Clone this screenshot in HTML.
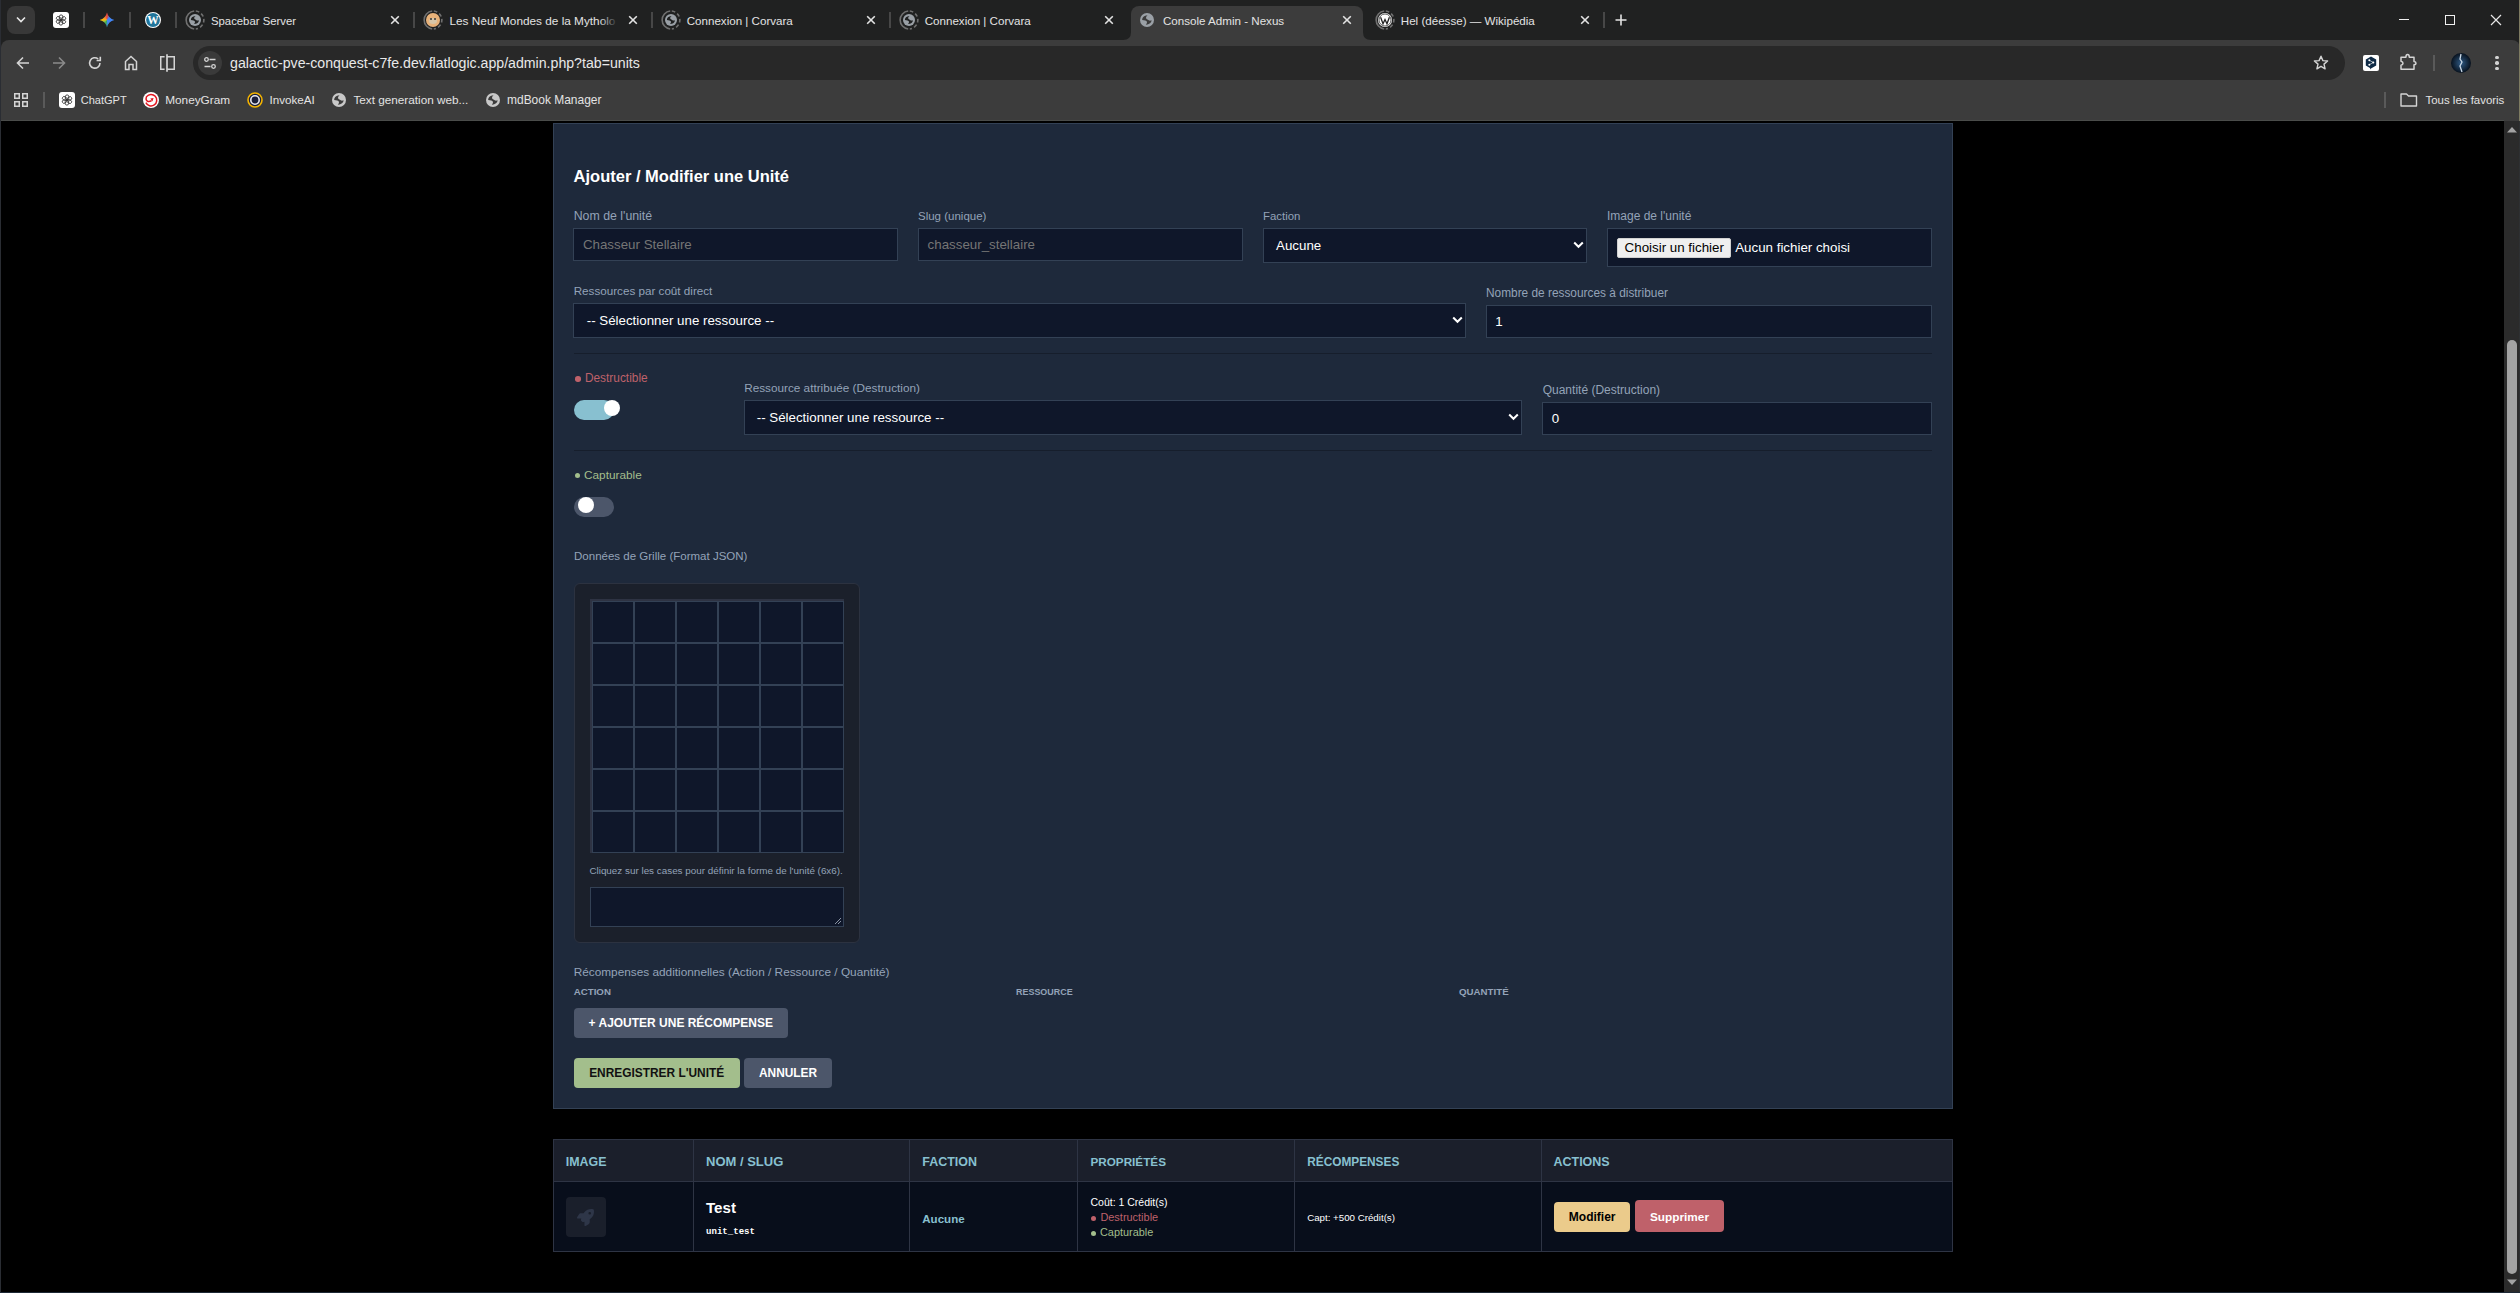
<!DOCTYPE html>
<html><head><meta charset="utf-8">
<style>
*{box-sizing:border-box;margin:0;padding:0}
html,body{width:2520px;height:1293px;overflow:hidden;background:#000;font-family:"Liberation Sans",sans-serif}
.b,.t{position:absolute}
.t{white-space:nowrap}
</style></head><body>
<div class="b" style="left:0px;top:0px;width:2520px;height:40px;background:#202121;"></div>
<div class="b" style="left:2504px;top:40px;width:16px;height:12px;background:#202121;"></div>
<div class="b" style="left:0px;top:40px;width:12px;height:12px;background:#202121;"></div>
<div class="b" style="left:1px;top:40px;width:2519px;height:81px;background:#3c3c3c;border-top-left-radius:8px;border-top-right-radius:8px;"></div>
<div class="b" style="left:0px;top:120px;width:2504px;height:1px;background:#4a4c4a;"></div>
<div class="b" style="left:1131px;top:6px;width:232px;height:40px;background:#3c3c3c;border-radius:8px 8px 0 0;"></div>
<svg class="b" style="left:1123px;top:32px" width="8" height="8"><path d="M0 8 Q8 8 8 0 L8 8 Z" fill="#3c3c3c"/></svg>
<svg class="b" style="left:1363px;top:32px" width="8" height="8"><path d="M8 8 Q0 8 0 0 L0 8 Z" fill="#3c3c3c"/></svg>
<div class="b" style="left:7px;top:6px;width:28px;height:28px;background:#383838;border-radius:8px;"></div>
<svg class="b" style="left:16px;top:16px" width="10" height="8"><path d="M1 1.5 L5 5.5 L9 1.5" fill="none" stroke="#e8e8e8" stroke-width="1.6"/></svg>
<div class="b" style="left:53px;top:12px;width:16px;height:16px;background:#fff;border-radius:3px;"></div>
<svg class="b" style="left:55px;top:14px" width="12" height="12" viewBox="0 0 12 12"><g fill="none" stroke="#333" stroke-width="0.85"><rect x="4.4" y="0.9" width="3.4" height="5.0" rx="1.7" transform="rotate(0 6 6)"/><rect x="4.4" y="0.9" width="3.4" height="5.0" rx="1.7" transform="rotate(60 6 6)"/><rect x="4.4" y="0.9" width="3.4" height="5.0" rx="1.7" transform="rotate(120 6 6)"/><rect x="4.4" y="0.9" width="3.4" height="5.0" rx="1.7" transform="rotate(180 6 6)"/><rect x="4.4" y="0.9" width="3.4" height="5.0" rx="1.7" transform="rotate(240 6 6)"/><rect x="4.4" y="0.9" width="3.4" height="5.0" rx="1.7" transform="rotate(300 6 6)"/></g></svg>
<div class="b" style="left:83px;top:12px;width:2px;height:16px;background:#474747;"></div>
<div class="b" style="left:129px;top:12px;width:2px;height:16px;background:#474747;"></div>
<div class="b" style="left:175px;top:12px;width:2px;height:16px;background:#474747;"></div>
<div class="b" style="left:99px;top:12px;width:16px;height:16px;background:conic-gradient(from 0deg at 50% 50%,#ea4335 0deg,#4285f4 45deg,#4285f4 165deg,#34a853 200deg,#8bc34a 240deg,#fbbc04 270deg,#f08a3a 315deg,#ea4335 360deg);clip-path:path('M8 0.6 Q9.4 6.6 15.4 8 Q9.4 9.4 8 15.4 Q6.6 9.4 0.6 8 Q6.6 6.6 8 0.6Z')"></div>
<svg class="b" style="left:145px;top:12px" width="16" height="16" viewBox="0 0 16 16"><circle cx="8" cy="8" r="8" fill="#fff"/><circle cx="8" cy="8" r="6.9" fill="#21759b"/><text x="8" y="12.2" text-anchor="middle" font-family="Liberation Serif" font-weight="bold" font-size="11.5" fill="#fff">W</text></svg>
<svg class="b" style="left:185px;top:10px" width="20" height="20" viewBox="0 0 20 20"><path d="M9.2 1.05 A9 9 0 0 0 9.2 18.95" fill="none" stroke="#707070" stroke-width="1.6"/><path d="M10.8 1.05 A9 9 0 0 1 10.8 18.95" fill="none" stroke="#707070" stroke-width="1.6" stroke-dasharray="3.6 2.4"/></svg>
<svg class="b" style="left:189px;top:14px" width="12" height="12" viewBox="0 0 14 14"><circle cx="7" cy="7" r="7" fill="#9aa0a6"/><path d="M2.2 6.9 C2.2 4.5 3.8 2.4 7.6 2.2 C6.4 3.2 5.8 4.4 6.1 5.3 C6.5 6.3 8.3 6.6 9.2 7.6 C10.0 7.9 10.9 7.6 11.6 7.3 C11.5 9.8 9.5 11.6 5.6 11.8 C6.8 10.8 7.2 9.8 6.9 8.8 C6.6 7.4 4.4 7.3 2.2 6.9 Z" fill="#202121"/></svg>
<svg class="b" style="left:423px;top:10px" width="20" height="20" viewBox="0 0 20 20"><path d="M9.2 1.05 A9 9 0 0 0 9.2 18.95" fill="none" stroke="#707070" stroke-width="1.6"/><path d="M10.8 1.05 A9 9 0 0 1 10.8 18.95" fill="none" stroke="#707070" stroke-width="1.6" stroke-dasharray="3.6 2.4"/></svg>
<svg class="b" style="left:426px;top:13px" width="14" height="14" viewBox="0 0 14 14"><circle cx="7" cy="7" r="7" fill="#e8b27a"/><ellipse cx="7" cy="8" rx="4" ry="3" fill="#d8c6a8"/><circle cx="5" cy="6" r="1" fill="#333"/><circle cx="9" cy="6" r="1" fill="#333"/></svg>
<svg class="b" style="left:661px;top:10px" width="20" height="20" viewBox="0 0 20 20"><path d="M9.2 1.05 A9 9 0 0 0 9.2 18.95" fill="none" stroke="#707070" stroke-width="1.6"/><path d="M10.8 1.05 A9 9 0 0 1 10.8 18.95" fill="none" stroke="#707070" stroke-width="1.6" stroke-dasharray="3.6 2.4"/></svg>
<svg class="b" style="left:665px;top:14px" width="12" height="12" viewBox="0 0 14 14"><circle cx="7" cy="7" r="7" fill="#9aa0a6"/><path d="M2.2 6.9 C2.2 4.5 3.8 2.4 7.6 2.2 C6.4 3.2 5.8 4.4 6.1 5.3 C6.5 6.3 8.3 6.6 9.2 7.6 C10.0 7.9 10.9 7.6 11.6 7.3 C11.5 9.8 9.5 11.6 5.6 11.8 C6.8 10.8 7.2 9.8 6.9 8.8 C6.6 7.4 4.4 7.3 2.2 6.9 Z" fill="#202121"/></svg>
<svg class="b" style="left:899px;top:10px" width="20" height="20" viewBox="0 0 20 20"><path d="M9.2 1.05 A9 9 0 0 0 9.2 18.95" fill="none" stroke="#707070" stroke-width="1.6"/><path d="M10.8 1.05 A9 9 0 0 1 10.8 18.95" fill="none" stroke="#707070" stroke-width="1.6" stroke-dasharray="3.6 2.4"/></svg>
<svg class="b" style="left:903px;top:14px" width="12" height="12" viewBox="0 0 14 14"><circle cx="7" cy="7" r="7" fill="#9aa0a6"/><path d="M2.2 6.9 C2.2 4.5 3.8 2.4 7.6 2.2 C6.4 3.2 5.8 4.4 6.1 5.3 C6.5 6.3 8.3 6.6 9.2 7.6 C10.0 7.9 10.9 7.6 11.6 7.3 C11.5 9.8 9.5 11.6 5.6 11.8 C6.8 10.8 7.2 9.8 6.9 8.8 C6.6 7.4 4.4 7.3 2.2 6.9 Z" fill="#202121"/></svg>
<svg class="b" style="left:1140px;top:13px" width="14" height="14" viewBox="0 0 14 14"><circle cx="7" cy="7" r="7" fill="#9aa0a6"/><path d="M2.2 6.9 C2.2 4.5 3.8 2.4 7.6 2.2 C6.4 3.2 5.8 4.4 6.1 5.3 C6.5 6.3 8.3 6.6 9.2 7.6 C10.0 7.9 10.9 7.6 11.6 7.3 C11.5 9.8 9.5 11.6 5.6 11.8 C6.8 10.8 7.2 9.8 6.9 8.8 C6.6 7.4 4.4 7.3 2.2 6.9 Z" fill="#3c3c3c"/></svg>
<svg class="b" style="left:1375px;top:10px" width="20" height="20" viewBox="0 0 20 20"><path d="M9.2 1.05 A9 9 0 0 0 9.2 18.95" fill="none" stroke="#707070" stroke-width="1.6"/><path d="M10.8 1.05 A9 9 0 0 1 10.8 18.95" fill="none" stroke="#707070" stroke-width="1.6" stroke-dasharray="3.6 2.4"/></svg>
<svg class="b" style="left:1377px;top:12px" width="16" height="16" viewBox="0 0 16 16"><circle cx="8" cy="8" r="7" fill="#fff"/><circle cx="8" cy="8" r="6" fill="none" stroke="#333" stroke-width="0.8"/><path d="M3.6 5.2 L6 11.8 L8 7.5 L10 11.8 L12.4 5.2" fill="none" stroke="#222" stroke-width="1.3"/></svg>
<div class="t" style="left:211.00px;top:16px;font-size:11.33px;line-height:11.33px;color:#e3e3e3;">Spacebar Server</div>
<div class="t" style="left:449.50px;top:16px;font-size:11.8px;line-height:11.8px;color:#e3e3e3;">Les Neuf Mondes de la Mytholo</div>
<div class="t" style="left:686.70px;top:15px;font-size:11.6px;line-height:11.6px;color:#e3e3e3;">Connexion | Corvara</div>
<div class="t" style="left:924.70px;top:15px;font-size:11.6px;line-height:11.6px;color:#e3e3e3;">Connexion | Corvara</div>
<div class="t" style="left:1163.00px;top:15px;font-size:11.6px;line-height:11.6px;color:#e3e3e3;">Console Admin - Nexus</div>
<div class="t" style="left:1400.80px;top:15px;font-size:11.6px;line-height:11.6px;color:#e3e3e3;">Hel (déesse) — Wikipédia</div>
<div class="b" style="left:600px;top:10px;width:18px;height:22px;background:linear-gradient(90deg,rgba(32,33,33,0),#202121);"></div>
<svg class="b" style="left:390px;top:15px" width="10" height="10" viewBox="0 0 10 10"><path d="M1.2 1.2 L8.8 8.8 M8.8 1.2 L1.2 8.8" stroke="#e3e3e3" stroke-width="1.6"/></svg>
<svg class="b" style="left:628px;top:15px" width="10" height="10" viewBox="0 0 10 10"><path d="M1.2 1.2 L8.8 8.8 M8.8 1.2 L1.2 8.8" stroke="#e3e3e3" stroke-width="1.6"/></svg>
<svg class="b" style="left:866px;top:15px" width="10" height="10" viewBox="0 0 10 10"><path d="M1.2 1.2 L8.8 8.8 M8.8 1.2 L1.2 8.8" stroke="#e3e3e3" stroke-width="1.6"/></svg>
<svg class="b" style="left:1104px;top:15px" width="10" height="10" viewBox="0 0 10 10"><path d="M1.2 1.2 L8.8 8.8 M8.8 1.2 L1.2 8.8" stroke="#e3e3e3" stroke-width="1.6"/></svg>
<svg class="b" style="left:1342px;top:15px" width="10" height="10" viewBox="0 0 10 10"><path d="M1.2 1.2 L8.8 8.8 M8.8 1.2 L1.2 8.8" stroke="#e3e3e3" stroke-width="1.6"/></svg>
<svg class="b" style="left:1580px;top:15px" width="10" height="10" viewBox="0 0 10 10"><path d="M1.2 1.2 L8.8 8.8 M8.8 1.2 L1.2 8.8" stroke="#e3e3e3" stroke-width="1.6"/></svg>
<div class="b" style="left:413px;top:12px;width:2px;height:16px;background:#474747;"></div>
<div class="b" style="left:651px;top:12px;width:2px;height:16px;background:#474747;"></div>
<div class="b" style="left:889px;top:12px;width:2px;height:16px;background:#474747;"></div>
<div class="b" style="left:1603px;top:12px;width:2px;height:16px;background:#474747;"></div>
<svg class="b" style="left:1615px;top:14px" width="12" height="12" viewBox="0 0 12 12"><path d="M6 0.5 V11.5 M0.5 6 H11.5" stroke="#e3e3e3" stroke-width="1.6"/></svg>
<div class="b" style="left:2399px;top:19px;width:10px;height:1.2px;background:#f0f0f0;"></div>
<div class="b" style="left:2445px;top:15px;width:10px;height:10px;border:1.2px solid #f0f0f0;"></div>
<svg class="b" style="left:2490px;top:14px" width="12" height="12" viewBox="0 0 12 12"><path d="M1 1 L11 11 M11 1 L1 11" stroke="#e8e8e8" stroke-width="1.2"/></svg>
<svg class="b" style="left:16px;top:56px" width="14" height="14" viewBox="0 0 14 14"><path d="M13 7 H2 M7 1.5 L1.5 7 L7 12.5" fill="none" stroke="#d4d4d4" stroke-width="1.6"/></svg>
<svg class="b" style="left:52px;top:56px" width="14" height="14" viewBox="0 0 14 14"><path d="M1 7 H12 M7 1.5 L12.5 7 L7 12.5" fill="none" stroke="#8a8a8a" stroke-width="1.6"/></svg>
<svg class="b" style="left:88px;top:56px" width="14" height="14" viewBox="0 0 14 14"><path d="M12 7 A5.2 5.2 0 1 1 10.2 3" fill="none" stroke="#d4d4d4" stroke-width="1.6"/><path d="M12.3 0.8 V4.5 H8.6" fill="none" stroke="#d4d4d4" stroke-width="1.6"/></svg>
<svg class="b" style="left:124px;top:55px" width="14" height="16" viewBox="0 0 14 16"><path d="M1.5 14.5 V6.5 L7 1.5 L12.5 6.5 V14.5 H9 V9.5 H5 V14.5 Z" fill="none" stroke="#d4d4d4" stroke-width="1.5"/></svg>
<svg class="b" style="left:159px;top:54px" width="17" height="18" viewBox="0 0 17 18"><path d="M5.6 2.75 H1.75 V15.25 H5.6" fill="none" stroke="#d4d4d4" stroke-width="1.5"/><path d="M8 0.3 V17.7" stroke="#d4d4d4" stroke-width="1.7"/><path d="M8 2.75 H15.25 V15.25 H8" fill="none" stroke="#d4d4d4" stroke-width="1.5"/></svg>
<div class="b" style="left:193px;top:46px;width:2152px;height:34px;background:#282828;border-radius:17px;"></div>
<div class="b" style="left:198px;top:51px;width:24px;height:24px;background:#3a3a3a;border-radius:50%;"></div>
<svg class="b" style="left:203px;top:56px" width="14" height="14" viewBox="0 0 14 14"><circle cx="3.5" cy="3.5" r="1.8" fill="none" stroke="#d4d4d4" stroke-width="1.3"/><path d="M6.5 3.5 H12.5 M1.5 10.5 H7.5" stroke="#d4d4d4" stroke-width="1.3"/><circle cx="10.5" cy="10.5" r="1.8" fill="none" stroke="#d4d4d4" stroke-width="1.3"/></svg>
<div class="t" style="left:230.10px;top:56px;font-size:14.15px;line-height:14.15px;color:#e8e8e8;">galactic-pve-conquest-c7fe.dev.flatlogic.app/admin.php?tab=units</div>
<svg class="b" style="left:2313px;top:55px" width="16" height="16" viewBox="0 0 16 16"><path d="M8 1.2 L9.9 5.6 L14.6 6 L11 9.1 L12.1 13.8 L8 11.3 L3.9 13.8 L5 9.1 L1.4 6 L6.1 5.6 Z" fill="none" stroke="#d4d4d4" stroke-width="1.4" stroke-linejoin="round"/></svg>
<div class="b" style="left:2363px;top:55px;width:16px;height:16px;background:#fff;border-radius:2px;"></div>
<svg class="b" style="left:2365px;top:56px" width="12" height="14" viewBox="0 0 12 14"><path d="M6 0.5 L11.2 3.5 V9.5 L6 12.5 L5.5 13.5 L5 12 L0.8 9.5 V3.5 Z" fill="#0f2b46"/><path d="M4.3 4.3 L8.3 6.5 L4.3 8.7" fill="none" stroke="#fff" stroke-width="0.6"/><circle cx="4.3" cy="4.3" r="1" fill="#fff"/><circle cx="8.3" cy="6.5" r="1" fill="#fff"/><circle cx="4.3" cy="8.7" r="1" fill="#fff"/></svg>
<svg class="b" style="left:2399px;top:53px" width="18" height="18" viewBox="0 0 18 18"><path d="M2 4.2 H6.9 Q7 1.6 8.6 1.6 Q10.2 1.6 10.3 4.2 H15 V8.6 Q17 8.8 17 10.2 Q17 11.6 15 11.8 V16.2 H2 V12.2 Q4 11.9 4 10.2 Q4 8.5 2 8.2 Z" fill="none" stroke="#d4d4d4" stroke-width="1.5" stroke-linejoin="round"/></svg>
<div class="b" style="left:2433px;top:55px;width:2px;height:16px;background:#5a5a5a;"></div>
<svg class="b" style="left:2451px;top:53px" width="20" height="20" viewBox="0 0 20 20"><defs><radialGradient id="av" cx="0.5" cy="0.5" r="0.5"><stop offset="0" stop-color="#2f5a85"/><stop offset="1" stop-color="#07111d"/></radialGradient></defs><circle cx="10" cy="10" r="10" fill="url(#av)"/><path d="M10 1 L9 6 L11 9 L9 13 L11 19" stroke="#c9d8e6" stroke-width="1.3" fill="none"/></svg>
<div class="b" style="left:2495px;top:55.75px;width:3.5px;height:3.5px;background:#d4d4d4;border-radius:50%;"></div>
<div class="b" style="left:2495px;top:61.25px;width:3.5px;height:3.5px;background:#d4d4d4;border-radius:50%;"></div>
<div class="b" style="left:2495px;top:66.75px;width:3.5px;height:3.5px;background:#d4d4d4;border-radius:50%;"></div>
<svg class="b" style="left:14px;top:93px" width="14" height="14" viewBox="0 0 14 14"><g fill="none" stroke="#d4d4d4" stroke-width="1.5"><rect x="0.75" y="0.75" width="4.5" height="4.5"/><rect x="8.75" y="0.75" width="4.5" height="4.5"/><rect x="0.75" y="8.75" width="4.5" height="4.5"/><rect x="8.75" y="8.75" width="4.5" height="4.5"/></g></svg>
<div class="b" style="left:43px;top:92px;width:2px;height:16px;background:#5a5a5a;"></div>
<div class="b" style="left:59px;top:92px;width:16px;height:16px;background:#fff;border-radius:3px;"></div>
<svg class="b" style="left:61px;top:94px" width="12" height="12" viewBox="0 0 12 12"><g fill="none" stroke="#333" stroke-width="0.85"><rect x="4.4" y="0.9" width="3.4" height="5.0" rx="1.7" transform="rotate(0 6 6)"/><rect x="4.4" y="0.9" width="3.4" height="5.0" rx="1.7" transform="rotate(60 6 6)"/><rect x="4.4" y="0.9" width="3.4" height="5.0" rx="1.7" transform="rotate(120 6 6)"/><rect x="4.4" y="0.9" width="3.4" height="5.0" rx="1.7" transform="rotate(180 6 6)"/><rect x="4.4" y="0.9" width="3.4" height="5.0" rx="1.7" transform="rotate(240 6 6)"/><rect x="4.4" y="0.9" width="3.4" height="5.0" rx="1.7" transform="rotate(300 6 6)"/></g></svg>
<svg class="b" style="left:143px;top:92px" width="16" height="16" viewBox="0 0 16 16"><circle cx="8" cy="8" r="8" fill="#fff"/><path d="M2.9 10.6 A5.7 5.7 0 1 0 3.6 4.6 Q2.2 8.2 4.6 9.3 Q6.3 10 8.6 8.6" fill="none" stroke="#e4151f" stroke-width="1.5"/><path d="M7.3 6.4 L10.6 6.1 L9.4 9.5Z" fill="#e4151f"/></svg>
<svg class="b" style="left:247px;top:92px" width="16" height="16" viewBox="0 0 16 16"><circle cx="8" cy="8" r="7" fill="#1b1f3a" stroke="#f4b400" stroke-width="1.6"/><circle cx="8" cy="8" r="4.2" fill="none" stroke="#e8e8f0" stroke-width="1.6"/><circle cx="8" cy="8" r="2.2" fill="#1b1f3a"/></svg>
<svg class="b" style="left:332px;top:93px" width="14" height="14" viewBox="0 0 14 14"><circle cx="7" cy="7" r="7" fill="#c8c8c8"/><path d="M2.2 6.9 C2.2 4.5 3.8 2.4 7.6 2.2 C6.4 3.2 5.8 4.4 6.1 5.3 C6.5 6.3 8.3 6.6 9.2 7.6 C10.0 7.9 10.9 7.6 11.6 7.3 C11.5 9.8 9.5 11.6 5.6 11.8 C6.8 10.8 7.2 9.8 6.9 8.8 C6.6 7.4 4.4 7.3 2.2 6.9 Z" fill="#3c3c3c"/></svg>
<svg class="b" style="left:486px;top:93px" width="14" height="14" viewBox="0 0 14 14"><circle cx="7" cy="7" r="7" fill="#c8c8c8"/><path d="M2.2 6.9 C2.2 4.5 3.8 2.4 7.6 2.2 C6.4 3.2 5.8 4.4 6.1 5.3 C6.5 6.3 8.3 6.6 9.2 7.6 C10.0 7.9 10.9 7.6 11.6 7.3 C11.5 9.8 9.5 11.6 5.6 11.8 C6.8 10.8 7.2 9.8 6.9 8.8 C6.6 7.4 4.4 7.3 2.2 6.9 Z" fill="#3c3c3c"/></svg>
<div class="t" style="left:80.70px;top:95px;font-size:11.04px;line-height:11.04px;color:#e3e3e3;">ChatGPT</div>
<div class="t" style="left:165.20px;top:95px;font-size:11.81px;line-height:11.81px;color:#e3e3e3;">MoneyGram</div>
<div class="t" style="left:269.50px;top:94px;font-size:11.64px;line-height:11.64px;color:#e3e3e3;">InvokeAI</div>
<div class="t" style="left:353.40px;top:94px;font-size:11.75px;line-height:11.75px;color:#e3e3e3;">Text generation web...</div>
<div class="t" style="left:507.00px;top:95px;font-size:11.97px;line-height:11.97px;color:#e3e3e3;">mdBook Manager</div>
<div class="t" style="left:2425.50px;top:95px;font-size:11.45px;line-height:11.45px;color:#e3e3e3;">Tous les favoris</div>
<div class="b" style="left:2384px;top:92px;width:2px;height:16px;background:#5a5a5a;"></div>
<svg class="b" style="left:2400px;top:93px" width="18" height="14" viewBox="0 0 18 14"><path d="M1 1 H6.5 L8.5 3 H16.5 V13 H1 Z" fill="none" stroke="#d4d4d4" stroke-width="1.4" stroke-linejoin="round"/></svg>
<div class="b" style="left:2504px;top:121px;width:16px;height:1172px;background:#2b2b2b;"></div>
<svg class="b" style="left:2507px;top:126px" width="10" height="7"><path d="M0 6.5 L5 1 L10 6.5Z" fill="#a3a3a3"/></svg>
<svg class="b" style="left:2507px;top:1279px" width="10" height="7"><path d="M0 0.5 L5 6 L10 0.5Z" fill="#a3a3a3"/></svg>
<div class="b" style="left:2507px;top:340px;width:9.5px;height:934px;background:#a3a3a3;border-radius:5px;"></div>
<div class="b" style="left:2519px;top:0px;width:1px;height:121px;background:#7d7b62;"></div>
<div class="b" style="left:2519px;top:121px;width:1px;height:1172px;background:#2e3032;"></div>
<div class="b" style="left:0px;top:0px;width:1px;height:1293px;background:#2a2d33;"></div>
<div class="b" style="left:0px;top:1292px;width:2520px;height:1px;background:#1d2835;"></div>
<div class="b" style="left:553px;top:123px;width:1400px;height:986px;background:#1e293b;border:1px solid #334155;"></div>
<div class="t" style="left:573.60px;top:168px;font-size:16.5px;line-height:16.5px;color:#fff;font-weight:bold;">Ajouter / Modifier une Unité</div>
<div class="t" style="left:573.65px;top:210px;font-size:12.35px;line-height:12.35px;color:#94a3b8;">Nom de l'unité</div>
<div class="t" style="left:918.00px;top:211px;font-size:11.5px;line-height:11.5px;color:#94a3b8;">Slug (unique)</div>
<div class="t" style="left:1263.00px;top:211px;font-size:11.4px;line-height:11.4px;color:#94a3b8;">Faction</div>
<div class="t" style="left:1607.00px;top:210px;font-size:12px;line-height:12px;color:#94a3b8;">Image de l'unité</div>
<div class="b" style="left:573px;top:228px;width:325px;height:33px;background:#0f172a;border:1px solid #334155;"></div>
<div class="b" style="left:918px;top:228px;width:325px;height:33px;background:#0f172a;border:1px solid #334155;"></div>
<div class="t" style="left:582.90px;top:238px;font-size:13.33px;line-height:13.33px;color:#757575;">Chasseur Stellaire</div>
<div class="t" style="left:927.60px;top:238px;font-size:13.33px;line-height:13.33px;color:#757575;">chasseur_stellaire</div>
<div class="b" style="left:1263px;top:228px;width:324px;height:35px;background:#0f172a;border:1px solid #334155;"></div>
<div class="t" style="left:1276.00px;top:239px;font-size:13.33px;line-height:13.33px;color:#fff;">Aucune</div>
<svg class="b" style="left:1573px;top:241px" width="11" height="8" viewBox="0 0 11 8"><path d="M1.2 1.5 L5.5 5.8 L9.8 1.5" fill="none" stroke="#fff" stroke-width="2"/></svg>
<div class="b" style="left:1607px;top:228px;width:325px;height:39px;background:#0f172a;border:1px solid #334155;"></div>
<div class="b" style="left:1617px;top:238px;width:114px;height:20px;background:#efefef;border-radius:2px;border:1px solid #d0d0d0;"></div>
<div class="t" style="left:1624.60px;top:241px;font-size:13.33px;line-height:13.33px;color:#000;">Choisir un fichier</div>
<div class="t" style="left:1735.20px;top:241px;font-size:13.33px;line-height:13.33px;color:#fff;">Aucun fichier choisi</div>
<div class="t" style="left:573.70px;top:285px;font-size:11.66px;line-height:11.66px;color:#94a3b8;">Ressources par coût direct</div>
<div class="t" style="left:1486.00px;top:288px;font-size:11.86px;line-height:11.86px;color:#94a3b8;">Nombre de ressources à distribuer</div>
<div class="b" style="left:573px;top:303px;width:893px;height:35px;background:#0f172a;border:1px solid #334155;"></div>
<div class="t" style="left:586.70px;top:314px;font-size:13.33px;line-height:13.33px;color:#fff;">-- Sélectionner une ressource --</div>
<svg class="b" style="left:1452px;top:316px" width="11" height="8" viewBox="0 0 11 8"><path d="M1.2 1.5 L5.5 5.8 L9.8 1.5" fill="none" stroke="#fff" stroke-width="2"/></svg>
<div class="b" style="left:1486px;top:305px;width:446px;height:33px;background:#0f172a;border:1px solid #334155;"></div>
<div class="t" style="left:1495.20px;top:315px;font-size:13.33px;line-height:13.33px;color:#fff;">1</div>
<div class="b" style="left:574px;top:353px;width:1358px;height:1px;background:#161e2c;"></div>
<div class="b" style="left:575px;top:376px;width:5.5px;height:5.5px;background:#bf616a;border-radius:50%;"></div>
<div class="t" style="left:584.90px;top:373px;font-size:11.9px;line-height:11.9px;color:#bf616a;">Destructible</div>
<div class="b" style="left:574px;top:400px;width:40px;height:20px;background:#88c0d0;border-radius:10px;"></div>
<div class="b" style="left:604px;top:400px;width:16px;height:16px;background:#fff;border-radius:50%;"></div>
<div class="t" style="left:744.20px;top:382px;font-size:11.76px;line-height:11.76px;color:#94a3b8;">Ressource attribuée (Destruction)</div>
<div class="b" style="left:744px;top:400px;width:778px;height:35px;background:#0f172a;border:1px solid #334155;"></div>
<div class="t" style="left:756.70px;top:411px;font-size:13.33px;line-height:13.33px;color:#fff;">-- Sélectionner une ressource --</div>
<svg class="b" style="left:1508px;top:413px" width="11" height="8" viewBox="0 0 11 8"><path d="M1.2 1.5 L5.5 5.8 L9.8 1.5" fill="none" stroke="#fff" stroke-width="2"/></svg>
<div class="t" style="left:1542.70px;top:384px;font-size:12px;line-height:12px;color:#94a3b8;">Quantité (Destruction)</div>
<div class="b" style="left:1542px;top:402px;width:390px;height:33px;background:#0f172a;border:1px solid #334155;"></div>
<div class="t" style="left:1551.80px;top:412px;font-size:13.33px;line-height:13.33px;color:#fff;">0</div>
<div class="b" style="left:574px;top:450px;width:1358px;height:1px;background:#161e2c;"></div>
<div class="b" style="left:574.5px;top:473px;width:5px;height:5px;background:#a3be8c;border-radius:50%;"></div>
<div class="t" style="left:584.00px;top:470px;font-size:11.8px;line-height:11.8px;color:#a3be8c;">Capturable</div>
<div class="b" style="left:574px;top:497px;width:40px;height:20px;background:#4c566a;border-radius:10px;"></div>
<div class="b" style="left:578px;top:497px;width:16px;height:16px;background:#fff;border-radius:50%;"></div>
<div class="t" style="left:574.00px;top:551px;font-size:11.52px;line-height:11.52px;color:#94a3b8;">Données de Grille (Format JSON)</div>
<div class="b" style="left:574px;top:583px;width:286px;height:360px;background:#1b202b;border:1px solid #2c3240;border-radius:6px;"></div>
<div class="b" style="left:590px;top:599px;width:254px;height:2px;background:#2e3343;"></div>
<div class="b" style="left:590px;top:599px;width:2px;height:254px;background:#2e3343;"></div>
<div class="b" style="left:592px;top:601px;width:42px;height:42px;background:#0f172a;border:1px solid #334155;"></div>
<div class="b" style="left:634px;top:601px;width:42px;height:42px;background:#0f172a;border:1px solid #334155;"></div>
<div class="b" style="left:676px;top:601px;width:42px;height:42px;background:#0f172a;border:1px solid #334155;"></div>
<div class="b" style="left:718px;top:601px;width:42px;height:42px;background:#0f172a;border:1px solid #334155;"></div>
<div class="b" style="left:760px;top:601px;width:42px;height:42px;background:#0f172a;border:1px solid #334155;"></div>
<div class="b" style="left:802px;top:601px;width:42px;height:42px;background:#0f172a;border:1px solid #334155;"></div>
<div class="b" style="left:592px;top:643px;width:42px;height:42px;background:#0f172a;border:1px solid #334155;"></div>
<div class="b" style="left:634px;top:643px;width:42px;height:42px;background:#0f172a;border:1px solid #334155;"></div>
<div class="b" style="left:676px;top:643px;width:42px;height:42px;background:#0f172a;border:1px solid #334155;"></div>
<div class="b" style="left:718px;top:643px;width:42px;height:42px;background:#0f172a;border:1px solid #334155;"></div>
<div class="b" style="left:760px;top:643px;width:42px;height:42px;background:#0f172a;border:1px solid #334155;"></div>
<div class="b" style="left:802px;top:643px;width:42px;height:42px;background:#0f172a;border:1px solid #334155;"></div>
<div class="b" style="left:592px;top:685px;width:42px;height:42px;background:#0f172a;border:1px solid #334155;"></div>
<div class="b" style="left:634px;top:685px;width:42px;height:42px;background:#0f172a;border:1px solid #334155;"></div>
<div class="b" style="left:676px;top:685px;width:42px;height:42px;background:#0f172a;border:1px solid #334155;"></div>
<div class="b" style="left:718px;top:685px;width:42px;height:42px;background:#0f172a;border:1px solid #334155;"></div>
<div class="b" style="left:760px;top:685px;width:42px;height:42px;background:#0f172a;border:1px solid #334155;"></div>
<div class="b" style="left:802px;top:685px;width:42px;height:42px;background:#0f172a;border:1px solid #334155;"></div>
<div class="b" style="left:592px;top:727px;width:42px;height:42px;background:#0f172a;border:1px solid #334155;"></div>
<div class="b" style="left:634px;top:727px;width:42px;height:42px;background:#0f172a;border:1px solid #334155;"></div>
<div class="b" style="left:676px;top:727px;width:42px;height:42px;background:#0f172a;border:1px solid #334155;"></div>
<div class="b" style="left:718px;top:727px;width:42px;height:42px;background:#0f172a;border:1px solid #334155;"></div>
<div class="b" style="left:760px;top:727px;width:42px;height:42px;background:#0f172a;border:1px solid #334155;"></div>
<div class="b" style="left:802px;top:727px;width:42px;height:42px;background:#0f172a;border:1px solid #334155;"></div>
<div class="b" style="left:592px;top:769px;width:42px;height:42px;background:#0f172a;border:1px solid #334155;"></div>
<div class="b" style="left:634px;top:769px;width:42px;height:42px;background:#0f172a;border:1px solid #334155;"></div>
<div class="b" style="left:676px;top:769px;width:42px;height:42px;background:#0f172a;border:1px solid #334155;"></div>
<div class="b" style="left:718px;top:769px;width:42px;height:42px;background:#0f172a;border:1px solid #334155;"></div>
<div class="b" style="left:760px;top:769px;width:42px;height:42px;background:#0f172a;border:1px solid #334155;"></div>
<div class="b" style="left:802px;top:769px;width:42px;height:42px;background:#0f172a;border:1px solid #334155;"></div>
<div class="b" style="left:592px;top:811px;width:42px;height:42px;background:#0f172a;border:1px solid #334155;"></div>
<div class="b" style="left:634px;top:811px;width:42px;height:42px;background:#0f172a;border:1px solid #334155;"></div>
<div class="b" style="left:676px;top:811px;width:42px;height:42px;background:#0f172a;border:1px solid #334155;"></div>
<div class="b" style="left:718px;top:811px;width:42px;height:42px;background:#0f172a;border:1px solid #334155;"></div>
<div class="b" style="left:760px;top:811px;width:42px;height:42px;background:#0f172a;border:1px solid #334155;"></div>
<div class="b" style="left:802px;top:811px;width:42px;height:42px;background:#0f172a;border:1px solid #334155;"></div>
<div class="t" style="left:589.40px;top:866px;font-size:9.87px;line-height:9.87px;color:#94a3b8;">Cliquez sur les cases pour définir la forme de l'unité (6x6).</div>
<div class="b" style="left:590px;top:887px;width:254px;height:40px;background:#0f172a;border:1px solid #334155;"></div>
<svg class="b" style="left:834px;top:917px" width="8" height="8" viewBox="0 0 8 8"><path d="M7 1 L1 7 M7 4 L4 7" stroke="#8a93a3" stroke-width="1"/></svg>
<div class="t" style="left:573.70px;top:967px;font-size:11.82px;line-height:11.82px;color:#94a3b8;">Récompenses additionnelles (Action / Ressource / Quantité)</div>
<div class="t" style="left:573.70px;top:987px;font-size:9.73px;line-height:9.73px;color:#94a3b8;font-weight:bold;">ACTION</div>
<div class="t" style="left:1016.00px;top:988px;font-size:8.95px;line-height:8.95px;color:#94a3b8;font-weight:bold;">RESSOURCE</div>
<div class="t" style="left:1459.00px;top:987px;font-size:9.73px;line-height:9.73px;color:#94a3b8;font-weight:bold;">QUANTITÉ</div>
<div class="b" style="left:574px;top:1008px;width:214px;height:30px;background:#4c566a;border-radius:4px;"></div>
<div class="t" style="left:588.60px;top:1017px;font-size:11.99px;line-height:11.99px;color:#fff;font-weight:bold;">+ AJOUTER UNE RÉCOMPENSE</div>
<div class="b" style="left:574px;top:1058px;width:166px;height:30px;background:#a3be8c;border-radius:4px;"></div>
<div class="t" style="left:589.20px;top:1068px;font-size:11.9px;line-height:11.9px;color:#111;font-weight:bold;">ENREGISTRER L'UNITÉ</div>
<div class="b" style="left:744px;top:1058px;width:88px;height:30px;background:#4c566a;border-radius:4px;"></div>
<div class="t" style="left:759.00px;top:1068px;font-size:11.9px;line-height:11.9px;color:#fff;font-weight:bold;">ANNULER</div>
<div class="b" style="left:553px;top:1139px;width:1400px;height:113px;background:#080e1b;border:1px solid #2e3444;"></div>
<div class="b" style="left:554px;top:1140px;width:1398px;height:41px;background:#1b1f2b;"></div>
<div class="b" style="left:554px;top:1181px;width:1398px;height:1px;background:#2e3444;"></div>
<div class="b" style="left:693px;top:1140px;width:1px;height:111px;background:#2e3444;"></div>
<div class="b" style="left:909px;top:1140px;width:1px;height:111px;background:#2e3444;"></div>
<div class="b" style="left:1077px;top:1140px;width:1px;height:111px;background:#2e3444;"></div>
<div class="b" style="left:1294px;top:1140px;width:1px;height:111px;background:#2e3444;"></div>
<div class="b" style="left:1541px;top:1140px;width:1px;height:111px;background:#2e3444;"></div>
<div class="t" style="left:565.80px;top:1156px;font-size:12.4px;line-height:12.4px;color:#88c0d0;font-weight:bold;">IMAGE</div>
<div class="t" style="left:706.00px;top:1155px;font-size:13.0px;line-height:13.0px;color:#88c0d0;font-weight:bold;">NOM / SLUG</div>
<div class="t" style="left:922.30px;top:1156px;font-size:12.46px;line-height:12.46px;color:#88c0d0;font-weight:bold;">FACTION</div>
<div class="t" style="left:1090.50px;top:1156px;font-size:11.71px;line-height:11.71px;color:#88c0d0;font-weight:bold;">PROPRIÉTÉS</div>
<div class="t" style="left:1307.20px;top:1157px;font-size:11.85px;line-height:11.85px;color:#88c0d0;font-weight:bold;">RÉCOMPENSES</div>
<div class="t" style="left:1553.50px;top:1156px;font-size:12.47px;line-height:12.47px;color:#88c0d0;font-weight:bold;">ACTIONS</div>
<div class="b" style="left:566px;top:1197px;width:40px;height:40px;background:#1a1f2b;border-radius:4px;"></div>
<svg class="b" style="left:577px;top:1209px" width="17" height="17" viewBox="0 0 512 512"><path fill="#2e3648" d="M156.6 384.9L125.7 354c-8.5-8.5-11.5-20.8-7.7-32.2c3-8.9 7-20.5 11.8-33.8L24 288c-8.6 0-16.6-4.6-20.9-12.1s-4.2-16.7 .2-24.1l52.5-88.5c13-21.9 36.5-35.3 61.9-35.3l82.3 0c2.4-4 4.8-7.7 7.2-11.3C289.1-4.1 411.1-8.1 483.9 5.3c11.6 2.1 20.6 11.2 22.8 22.8c13.4 72.9 9.3 194.8-111.4 276.7c-3.5 2.4-7.3 4.8-11.3 7.2l0 82.3c0 25.4-13.4 49-35.3 61.9l-88.5 52.5c-7.4 4.4-16.6 4.5-24.1 .2s-12.1-12.2-12.1-20.9l0-107.2c-14.1 4.9-26.4 8.9-35.7 11.9c-11.2 3.6-23.4 .5-31.8-7.8zM384 168a40 40 0 1 0 0-80 40 40 0 1 0 0 80z"/></svg>
<div class="t" style="left:706.00px;top:1200px;font-size:15.14px;line-height:15.14px;color:#fff;font-weight:bold;">Test</div>
<div class="t" style="left:706.00px;top:1227px;font-size:9.07px;line-height:9.07px;color:#fff;font-weight:bold;font-family:'Liberation Mono',monospace;">unit_test</div>
<div class="t" style="left:922.30px;top:1214px;font-size:11.54px;line-height:11.54px;color:#88c0d0;font-weight:bold;">Aucune</div>
<div class="t" style="left:1090.50px;top:1197px;font-size:10.5px;line-height:10.5px;color:#fff;">Coût: 1 Crédit(s)</div>
<div class="b" style="left:1091.4px;top:1215.8px;width:5px;height:5px;background:#bf616a;border-radius:50%;"></div>
<div class="t" style="left:1100.40px;top:1212px;font-size:10.95px;line-height:10.95px;color:#bf616a;">Destructible</div>
<div class="b" style="left:1091.3px;top:1230.9px;width:5px;height:5px;background:#a3be8c;border-radius:50%;"></div>
<div class="t" style="left:1100.00px;top:1227px;font-size:10.9px;line-height:10.9px;color:#a3be8c;">Capturable</div>
<div class="t" style="left:1307.20px;top:1213px;font-size:9.72px;line-height:9.72px;color:#fff;">Capt: +500 Crédit(s)</div>
<div class="b" style="left:1554px;top:1202px;width:76px;height:30px;background:#ebcb8b;border-radius:4px;"></div>
<div class="t" style="left:1568.80px;top:1211px;font-size:12.03px;line-height:12.03px;color:#000;font-weight:bold;">Modifier</div>
<div class="b" style="left:1635px;top:1200px;width:89px;height:32px;background:#bf616a;border-radius:4px;"></div>
<div class="t" style="left:1650.00px;top:1212px;font-size:11.8px;line-height:11.8px;color:#fff;font-weight:bold;">Supprimer</div>
</body></html>
